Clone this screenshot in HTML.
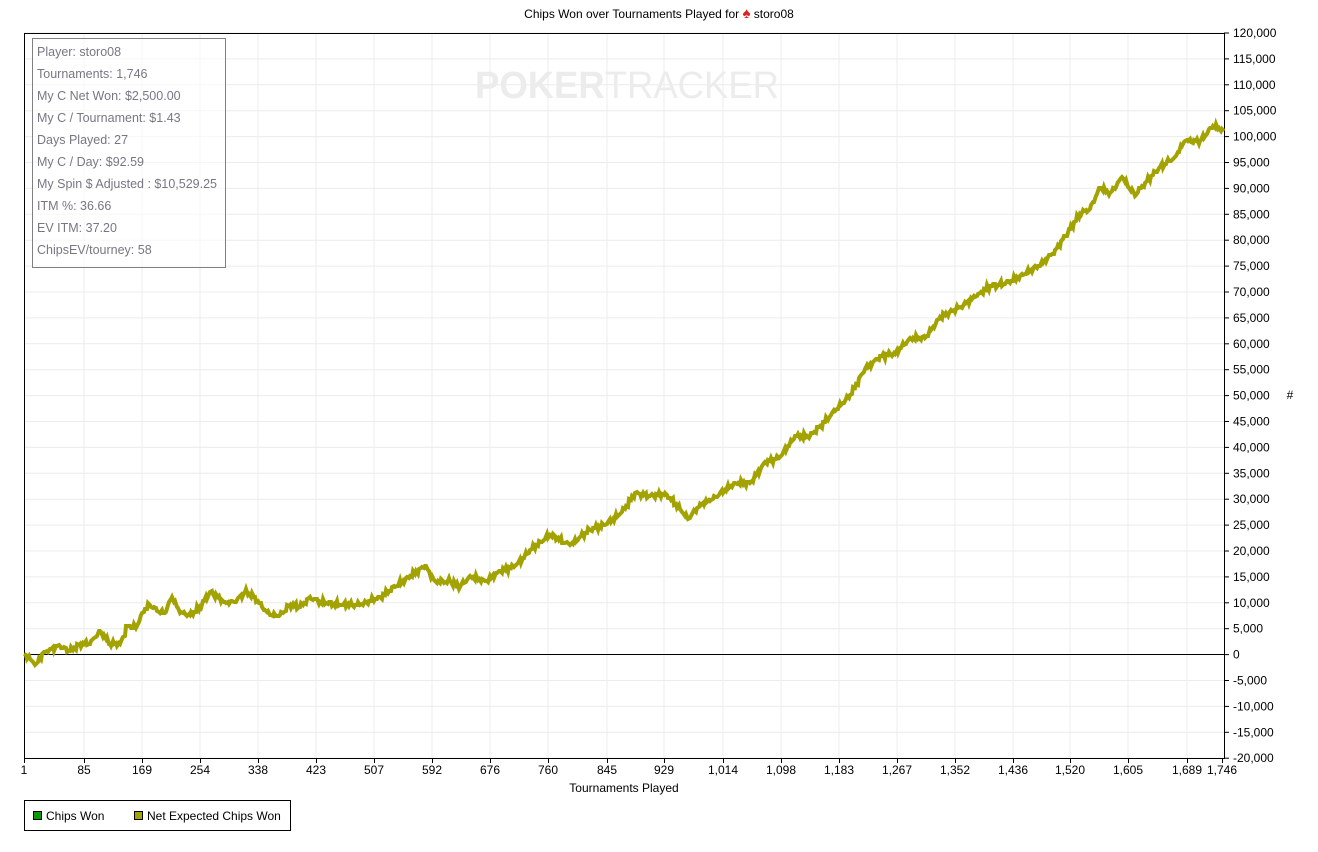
<!DOCTYPE html>
<html><head><meta charset="utf-8"><style>
html,body{margin:0;padding:0;background:#fff;width:1318px;height:852px;overflow:hidden;font-family:"Liberation Sans",Arial,sans-serif}
svg text{font-family:"Liberation Sans",Arial,sans-serif}
.stats{position:absolute;left:32px;top:38px;width:192px;height:228px;border:1px solid #808080;background:rgba(255,255,255,0.6);font-size:12.5px;color:#777783}
.stats div{position:absolute;left:4px}
</style></head><body>
<svg width="1318" height="852" style="position:absolute;left:0;top:0">
<text x="659" y="18" font-size="12" text-anchor="middle">Chips Won over Tournaments Played for <tspan fill="#d22" font-size="15">♠</tspan> storo08</text>
<g stroke="#ececec" stroke-width="1">
<line x1="84" y1="33" x2="84" y2="758"/><line x1="142" y1="33" x2="142" y2="758"/><line x1="200" y1="33" x2="200" y2="758"/><line x1="258" y1="33" x2="258" y2="758"/><line x1="316" y1="33" x2="316" y2="758"/><line x1="374" y1="33" x2="374" y2="758"/><line x1="432" y1="33" x2="432" y2="758"/><line x1="490" y1="33" x2="490" y2="758"/><line x1="548" y1="33" x2="548" y2="758"/><line x1="607" y1="33" x2="607" y2="758"/><line x1="664" y1="33" x2="664" y2="758"/><line x1="723" y1="33" x2="723" y2="758"/><line x1="781" y1="33" x2="781" y2="758"/><line x1="839" y1="33" x2="839" y2="758"/><line x1="897" y1="33" x2="897" y2="758"/><line x1="955" y1="33" x2="955" y2="758"/><line x1="1013" y1="33" x2="1013" y2="758"/><line x1="1070" y1="33" x2="1070" y2="758"/><line x1="1128" y1="33" x2="1128" y2="758"/><line x1="1187" y1="33" x2="1187" y2="758"/>
</g>
<g id="hg" stroke="#ececec"></g>
<text x="627" y="98" font-size="38" font-weight="bold" fill="#ececec" text-anchor="middle" textLength="304" lengthAdjust="spacingAndGlyphs">POKER<tspan font-weight="normal">TRACKER</tspan></text>
<line x1="24" y1="654.5" x2="1224" y2="654.5" stroke="#000"/>
<line x1="24.5" y1="33" x2="24.5" y2="759" stroke="#000"/>
<line x1="24" y1="33.5" x2="1224" y2="33.5" stroke="#000"/>
<line x1="1224.5" y1="33" x2="1224.5" y2="759" stroke="#000"/>
<line x1="24" y1="758.5" x2="1224" y2="758.5" stroke="#000"/>
<g id="yl" font-size="12"></g>
<g id="xl" font-size="12" text-anchor="middle"></g>
<text x="1290" y="399" font-size="12" text-anchor="middle">#</text>
<text x="624" y="792" font-size="12" text-anchor="middle">Tournaments Played</text>
<polyline fill="none" stroke="#a2a200" stroke-width="4" stroke-linejoin="miter" id="pl"/>
<rect x="24.5" y="800.5" width="266" height="30" fill="none" stroke="#000"/>
<rect x="33.5" y="811.5" width="8" height="8" fill="#0a9a0a" stroke="#000"/>
<text x="46" y="820" font-size="12">Chips Won</text>
<rect x="134.5" y="811.5" width="8" height="8" fill="#a2a200" stroke="#000"/>
<text x="147" y="820" font-size="12">Net Expected Chips Won</text>
</svg>
<div class="stats">
<div style="top:6px">Player: storo08</div>
<div style="top:28px">Tournaments: 1,746</div>
<div style="top:50px">My C Net Won: $2,500.00</div>
<div style="top:72px">My C / Tournament: $1.43</div>
<div style="top:94px">Days Played: 27</div>
<div style="top:116px">My C / Day: $92.59</div>
<div style="top:138px">My Spin $ Adjusted : $10,529.25</div>
<div style="top:160px">ITM %: 36.66</div>
<div style="top:182px">EV ITM: 37.20</div>
<div style="top:204px">ChipsEV/tourney: 58</div>
</div>
<script>
var NS="http://www.w3.org/2000/svg";
var hg=document.getElementById('hg'),yl=document.getElementById('yl'),xl=document.getElementById('xl');
for(var k=0;k<=28;k++){var y=33+k*25.9;var v=120000-k*5000;
 var l=document.createElementNS(NS,'line');l.setAttribute('x1',24);l.setAttribute('x2',1224);l.setAttribute('y1',y);l.setAttribute('y2',y);hg.appendChild(l);
 var t=document.createElementNS(NS,'line');t.setAttribute('x1',1224);t.setAttribute('x2',1229);t.setAttribute('y1',y);t.setAttribute('y2',y);t.setAttribute('stroke','#000');yl.appendChild(t);
 var s=document.createElementNS(NS,'text');s.setAttribute('x',1233);s.setAttribute('y',y+4);s.textContent=v.toLocaleString('en-US');yl.appendChild(s);}
var xs=[[24,'1'],[84,'85'],[142,'169'],[200,'254'],[258,'338'],[316,'423'],[374,'507'],[432,'592'],[490,'676'],[548,'760'],[607,'845'],[664,'929'],[723,'1,014'],[781,'1,098'],[839,'1,183'],[897,'1,267'],[955,'1,352'],[1013,'1,436'],[1070,'1,520'],[1128,'1,605'],[1187,'1,689'],[1222,'1,746']];
xs.forEach(function(a){var t=document.createElementNS(NS,'line');t.setAttribute('x1',a[0]+.5);t.setAttribute('x2',a[0]+.5);t.setAttribute('y1',758);t.setAttribute('y2',763);t.setAttribute('stroke','#000');xl.appendChild(t);
 var s=document.createElementNS(NS,'text');s.setAttribute('x',a[0]);s.setAttribute('y',774);s.textContent=a[1];xl.appendChild(s);});
var d=[[24,0],[30,-1],[36,-2],[42,0],[50,1],[60,1.5],[70,0.5],[80,2],[90,2],[100,4.5],[110,2],[120,2],[128,5.5],[136,5],[142,8],[150,9.5],[160,8],[165,8],[172,11],[180,8],[190,7.5],[200,9],[210,12],[218,11],[225,10],[235,10],[245,12],[255,11],[262,9],[270,7.5],[280,7.5],[290,9.5],[300,9],[310,11],[320,10],[340,9.5],[360,9.5],[380,11],[395,13],[410,15],[425,17],[435,14],[450,14],[460,13],[470,15],[485,14],[500,16],[515,17],[530,20],[550,23],[570,21],[590,24],[605,25],[620,27],[635,31],[650,30.5],[665,31],[680,28],[688,26],[700,29],[710,29.5],[720,31],[735,33],[750,33],[765,37],[780,38],[795,42],[810,42],[820,44],[835,47],[850,50],[865,55],[880,57.5],[895,58],[910,61],[925,61],[940,65],[960,67],[975,69],[990,71],[1005,71.5],[1020,73],[1040,75],[1055,78],[1070,82],[1080,85],[1090,86],[1100,90],[1110,89],[1122,92],[1135,88.5],[1145,91],[1160,94],[1175,96],[1185,99],[1200,99],[1213,102],[1224,101]];
var pts=[];for(var i=0;i<d.length-1;i++){var a=d[i],b=d[i+1];var n=Math.max(2,Math.round((b[0]-a[0])/1.5));for(var j=0;j<n;j++){var f=j/n;var x=a[0]+(b[0]-a[0])*f;var v=a[1]+(b[1]-a[1])*f+(j?(Math.sin(x*2.3)*0.35+Math.sin(x*0.9)*0.3):0);var px=Math.round(x),py=Math.round(654-v*5.18);pts.push(px+','+py);}}
pts.push('1224,'+(654-101*5.18).toFixed(0));
document.getElementById('pl').setAttribute('points',pts.join(' '));
</script>
</body></html>
